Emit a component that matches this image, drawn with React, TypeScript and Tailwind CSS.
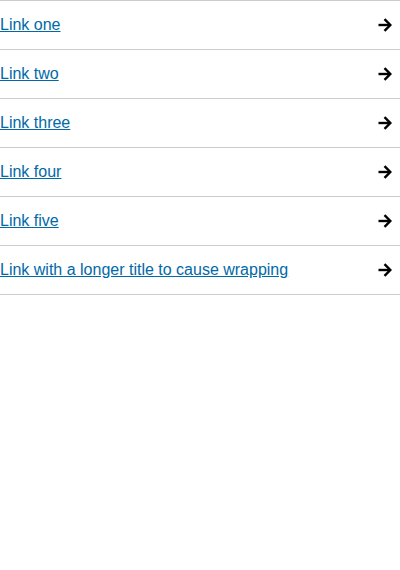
import React from "react";

const links = [
  "Link one",
  "Link two",
  "Link three",
  "Link four",
  "Link five",
  "Link with a longer title to cause wrapping",
];

function Arrow() {
  return (
    <svg width="16" height="16" viewBox="0 0 16 16" className="mr-[7px]" fill="none" stroke="black" strokeWidth="2.4">
      <path d="M1.5 8h11" />
      <path d="M7.5 2.2L13.3 8l-5.8 5.8" strokeLinejoin="miter" />
    </svg>
  );
}

export default function App() {
  return (
    <div className="w-[400px] bg-white" style={{ fontFamily: '"Liberation Sans", Arial, sans-serif' }}>
      <ul className="border-t border-[#cccccc]">
        {links.map((l) => (
          <li key={l} className="flex h-[49px] items-center justify-between border-b border-[#cccccc]">
            <a href="#" className="text-[16px] leading-[20px] text-[#0069a8] underline">
              {l}
            </a>
            <Arrow />
          </li>
        ))}
      </ul>
    </div>
  );
}
